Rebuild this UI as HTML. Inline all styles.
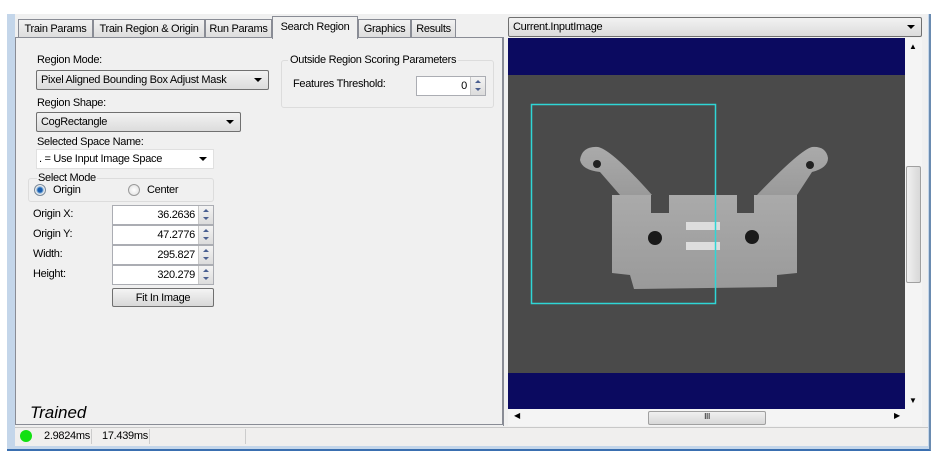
<!DOCTYPE html>
<html><head><style>
*{box-sizing:border-box;margin:0;padding:0}
body{width:942px;height:460px;background:#fff;position:relative;overflow:hidden;font-family:"Liberation Sans",sans-serif;font-size:11px;color:#000;letter-spacing:-0.3px}
.a{position:absolute}
.tab{position:absolute;top:19px;height:19px;border:1px solid #898c95;border-bottom:none;background:linear-gradient(#f2f2f2,#dcdcdc);padding:3px 0 0;text-align:center;white-space:nowrap}
.combo{position:absolute;border:1px solid #707070;border-radius:2px;background:linear-gradient(#f2f2f2,#dcdcdc);padding:3px 4px;white-space:nowrap}
.arr{position:absolute;right:6px;top:7px;width:0;height:0;border-left:4px solid transparent;border-right:4px solid transparent;border-top:4px solid #000}
.inp{position:absolute;left:112px;width:102px;height:20px;border:1px solid #abadb3;background:#fff;text-align:right;padding:3px 18px 0 0}
.spin{position:absolute;right:0;top:0;width:15px;height:18px;background:linear-gradient(#f4f4f4,#dcdcdc);border-left:1px solid #c8c8c8}
.spin:before{content:"";position:absolute;left:4px;top:3px;border-left:3px solid transparent;border-right:3px solid transparent;border-bottom:3px solid #4a5f90}
.spin:after{content:"";position:absolute;left:4px;top:11px;border-left:3px solid transparent;border-right:3px solid transparent;border-top:3px solid #4a5f90}
.lbl{position:absolute;left:33px}
</style></head><body>
<!-- window frame -->
<div class="a" style="left:7px;top:14px;width:924px;height:437px;background:#c4d6ea;border-right:2px solid #6a8bb0;border-bottom:2px solid #3a6fb0"></div>
<div class="a" style="left:15px;top:14px;width:913px;height:432px;background:#f0f0f0"></div>
<!-- tabs -->
<div class="tab" style="left:18px;width:75px">Train Params</div>
<div class="tab" style="left:93px;width:112px">Train Region &amp; Origin</div>
<div class="tab" style="left:205px;width:67px">Run Params</div>
<div class="tab" style="left:358px;width:53px">Graphics</div>
<div class="tab" style="left:411px;width:45px">Results</div>
<div class="a" style="left:15px;top:37px;width:488px;height:388px;border:1px solid #898c95;background:#f0f0f0"></div>
<div class="tab" style="left:272px;top:16px;width:86px;height:23px;background:#f0f0f0;padding-top:4px">Search Region</div>
<!-- left content -->
<div class="a" style="left:37px;top:54px">Region Mode:</div>
<div class="combo" style="left:36px;top:70px;width:233px;height:20px">Pixel Aligned Bounding Box Adjust Mask<div class="arr"></div></div>
<div class="a" style="left:37px;top:97px">Region Shape:</div>
<div class="combo" style="left:36px;top:112px;width:205px;height:20px">CogRectangle<div class="arr"></div></div>
<div class="a" style="left:37px;top:136px">Selected Space Name:</div>
<div class="a" style="left:36px;top:149px;width:178px;height:20px;border:1px solid #e0e0e0;background:#fff;padding:3px 2px">. = Use Input Image Space<div class="arr"></div></div>
<div class="a" style="left:28px;top:178px;width:186px;height:24px;border:1px solid #dcdcdc;border-radius:3px"></div>
<div class="a" style="left:37px;top:172px;background:#f0f0f0;padding:0 1px">Select Mode</div>
<div class="a" style="left:34px;top:184px;width:12px;height:12px;border-radius:50%;border:1px solid #7a8a9a;background:radial-gradient(#1a5fb0 30%,#8ab4dc 45%,#eee 60%)"></div>
<div class="a" style="left:53px;top:184px">Origin</div>
<div class="a" style="left:128px;top:184px;width:12px;height:12px;border-radius:50%;border:1px solid #9a9a9a;background:radial-gradient(#fff,#ddd)"></div>
<div class="a" style="left:147px;top:184px">Center</div>
<div class="lbl" style="top:208px">Origin X:</div>
<div class="inp" style="top:205px">36.2636<div class="spin"></div></div>
<div class="lbl" style="top:228px">Origin Y:</div>
<div class="inp" style="top:225px">47.2776<div class="spin"></div></div>
<div class="lbl" style="top:248px">Width:</div>
<div class="inp" style="top:245px">295.827<div class="spin"></div></div>
<div class="lbl" style="top:268px">Height:</div>
<div class="inp" style="top:265px">320.279<div class="spin"></div></div>
<div class="a" style="left:112px;top:288px;width:102px;height:19px;border:1px solid #707070;border-radius:2px;background:linear-gradient(#f4f4f4,#d8d8d8);text-align:center;padding-top:3px">Fit In Image</div>
<div class="a" style="left:281px;top:60px;width:213px;height:48px;border:1px solid #dcdcdc;border-radius:3px"></div>
<div class="a" style="left:288px;top:54px;background:#f0f0f0;padding:0 2px">Outside Region Scoring Parameters</div>
<div class="a" style="left:293px;top:78px">Features Threshold:</div>
<div class="a" style="left:416px;top:76px;width:70px;height:20px;border:1px solid #abadb3;background:#fff;text-align:right;padding:3px 18px 0 0">0<div class="spin"></div></div>
<div class="a" style="left:30px;top:403px;font-size:17px;font-style:italic;letter-spacing:0">Trained</div>
<!-- right -->
<div class="a" style="left:503px;top:37px;width:5px;height:389px;background:#f0f0f0;border-left:1px solid #898c95"></div>
<div class="combo" style="left:508px;top:17px;width:414px;height:20px;padding-top:3px">Current.InputImage<div class="arr"></div></div>
<div class="a" style="left:508px;top:38px;width:397px;height:371px;background:#0b0a60"></div>
<svg class="a" style="left:508px;top:75px" width="397" height="298" viewBox="508 75 397 298">
<defs><linearGradient id="g" x1="0" x2="0" y1="0" y2="1"><stop offset="0" stop-color="#aaa"/><stop offset="1" stop-color="#9a9a9a"/></linearGradient></defs>
<rect x="508" y="75" width="397" height="298" fill="#4a4a4a"/>
<path d="M620 195 L600 172 Q582 170 580 160 Q582 146 598 147 Q612 150 652 195 Z M797 195 L812 172 Q828 168 828 158 Q826 146 812 147 Q800 150 757 195 Z" fill="url(#g)"/>
<path d="M612 195 L651 195 L651 213 L669 213 L669 195 L737 195 L737 213 L754 213 L754 195 L797 195 L797 273 L777 275 L777 287 L634 289 L630 275 L612 273 Z" fill="url(#g)"/>
<circle cx="597" cy="164" r="4" fill="#222"/><circle cx="810" cy="165" r="4" fill="#222"/>
<circle cx="655" cy="238" r="7" fill="#1a1a1a"/><circle cx="752" cy="237" r="7" fill="#1a1a1a"/>
<rect x="686" y="222" width="34" height="8" fill="#ddd"/><rect x="686" y="242" width="34" height="8" fill="#ddd"/>
<rect x="531.5" y="104.5" width="184" height="199" fill="none" stroke="#2fd6d6" stroke-width="1.5"/>
</svg>
<div class="a" style="left:905px;top:38px;width:17px;height:371px;background:#f4f4f4"></div>
<div class="a" style="left:906px;top:166px;width:15px;height:117px;border:1px solid #a0a0a0;border-radius:2px;background:linear-gradient(90deg,#f0f0f0,#d8d8d8)"></div>
<div class="a" style="left:909px;top:42px;font-size:8px">▲</div>
<div class="a" style="left:909px;top:396px;font-size:8px">▼</div>
<div class="a" style="left:508px;top:409px;width:414px;height:17px;background:#f4f4f4"></div>
<div class="a" style="left:648px;top:411px;width:118px;height:14px;border:1px solid #a0a0a0;border-radius:2px;background:linear-gradient(#f0f0f0,#d8d8d8);text-align:center;font-size:8px">III</div>
<div class="a" style="left:514px;top:411px;font-size:8px">◀</div>
<div class="a" style="left:894px;top:411px;font-size:8px">▶</div>
<!-- status -->
<div class="a" style="left:15px;top:427px;width:913px;height:19px;background:#f0efee;border-top:1px solid #c8c8c8"></div>
<div class="a" style="left:20px;top:430px;width:12px;height:12px;border-radius:50%;background:#12e012"></div>
<div class="a" style="left:44px;top:430px">2.9824ms</div>
<div class="a" style="left:91px;top:429px;width:1px;height:15px;background:#ccc"></div>
<div class="a" style="left:102px;top:430px">17.439ms</div>
<div class="a" style="left:149px;top:429px;width:1px;height:15px;background:#ccc"></div>
<div class="a" style="left:245px;top:429px;width:1px;height:15px;background:#ccc"></div>
</body></html>
